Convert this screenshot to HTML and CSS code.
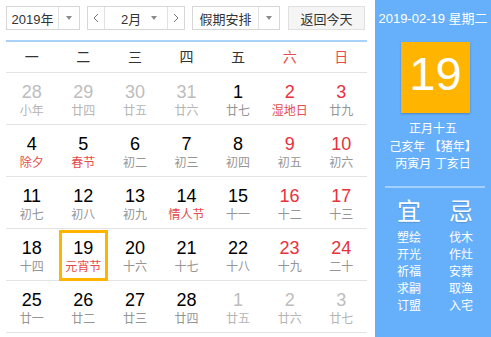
FILE: index.html
```html
<!DOCTYPE html>
<html lang="zh">
<head>
    <meta charset="UTF-8">
    <title>万年历</title>
    <link rel="stylesheet" href="styles.css">
</head>
<body>
    <div class="cal">
        <div class="toolbar">
            <div class="sel sel-year">
                <span class="sel-text">2019年</span>
                <span class="sel-arrow"><i class="caret"></i></span>
            </div>
            <div class="sel sel-month">
                <span class="nav-btn">
                    <svg width="6" height="10" viewBox="0 0 6 10"><polyline points="5,1 1,5 5,9" fill="none" stroke="#777" stroke-width="1"/></svg>
                </span>
                <span class="sel-text month-text">2月 <i class="caret"></i></span>
                <span class="nav-btn">
                    <svg width="6" height="10" viewBox="0 0 6 10"><polyline points="1,1 5,5 1,9" fill="none" stroke="#777" stroke-width="1"/></svg>
                </span>
            </div>
            <div class="sel sel-holiday">
                <span class="sel-text">假期安排</span>
                <span class="sel-arrow"><i class="caret"></i></span>
            </div>
            <div class="today-btn">返回今天</div>
        </div>

        <div class="week">
            <span>一</span><span>二</span><span>三</span><span>四</span><span>五</span><span class="red">六</span><span class="red">日</span>
        </div>

        <div class="grid" id="grid"></div>
    </div>

    <div class="side">
        <div class="side-date">2019-02-19 星期二</div>
        <div class="big-day">19</div>
        <div class="lunar">
            <p>正月十五</p>
            <p>己亥年 【猪年】</p>
            <p>丙寅月 丁亥日</p>
        </div>
        <div class="divider"></div>
        <div class="yiji">
            <div class="col">
                <div class="yj-title">宜</div>
                <p>塑绘</p><p>开光</p><p>祈福</p><p>求嗣</p><p>订盟</p>
            </div>
            <div class="col">
                <div class="yj-title">忌</div>
                <p>伐木</p><p>作灶</p><p>安葬</p><p>取渔</p><p>入宅</p>
            </div>
        </div>
    </div>

    <script>
        // [day, lunar, flags]  o = other month, w = weekend, f = festival, s = selected
        let days = [
            ["28", "小年", "o"], ["29", "廿四", "o"], ["30", "廿五", "o"], ["31", "廿六", "o"], ["1", "廿七", ""], ["2", "湿地日", "w f"], ["3", "廿九", "w"],
            ["4", "除夕", "f"], ["5", "春节", "f"], ["6", "初二", ""], ["7", "初三", ""], ["8", "初四", ""], ["9", "初五", "w"], ["10", "初六", "w"],
            ["11", "初七", ""], ["12", "初八", ""], ["13", "初九", ""], ["14", "情人节", "f"], ["15", "十一", ""], ["16", "十二", "w"], ["17", "十三", "w"],
            ["18", "十四", ""], ["19", "元宵节", "f s"], ["20", "十六", ""], ["21", "十七", ""], ["22", "十八", ""], ["23", "十九", "w"], ["24", "二十", "w"],
            ["25", "廿一", ""], ["26", "廿二", ""], ["27", "廿三", ""], ["28", "廿四", ""], ["1", "廿五", "o"], ["2", "廿六", "o"], ["3", "廿七", "o"]
        ];

        let grid = document.getElementById("grid");
        for (let r = 0; r < 5; r++) {
            let row = document.createElement("div");
            row.className = "row";
            for (let c = 0; c < 7; c++) {
                let d = days[r * 7 + c];
                let flags = d[2].split(" ");
                let cell = document.createElement("div");
                cell.className = "cell";
                if (flags.includes("o")) cell.classList.add("other");
                if (flags.includes("w")) cell.classList.add("weekend");
                if (flags.includes("f")) cell.classList.add("fest");
                if (flags.includes("s")) cell.classList.add("selected");
                cell.innerHTML = '<div class="num">' + d[0] + '</div><div class="lun">' + d[1] + '</div>';
                row.appendChild(cell);
            }
            grid.appendChild(row);
        }
    </script>
</body>
</html>
```

FILE: styles.css
```css
html, body {
    margin: 0;
    padding: 0;
    height: 100%;
    overflow: hidden;
    font-family: "Liberation Sans", "Noto Sans CJK SC", sans-serif;
    background: #fff;
}
body {
    display: flex;
}
p {
    margin: 0;
}
.cal {
    width: 361px;
    padding: 6px 8px 0 6px;
    flex-shrink: 0;
}
.toolbar {
    display: flex;
    height: 24px;
    font-size: 13px;
    color: #333;
}
.sel {
    display: flex;
    box-sizing: border-box;
    height: 24px;
    border: 1px solid #d6d6d6;
    background: #fff;
    margin-right: 7px;
}
.sel-text {
    display: flex;
    align-items: center;
    justify-content: center;
    border-right: 1px solid #e2e2e2;
}
.sel-arrow {
    display: flex;
    align-items: center;
    justify-content: center;
    flex: 1;
}
.caret {
    display: inline-block;
    width: 0;
    height: 0;
    border-left: 3px solid transparent;
    border-right: 3px solid transparent;
    border-top: 4px solid #8a8a8a;
}
.sel-year {
    width: 74px;
}
.sel-year .sel-text {
    width: 51px;
}
.sel-month {
    width: 98px;
}
.nav-btn {
    width: 16px;
    display: flex;
    align-items: center;
    justify-content: center;
}
.month-text {
    flex: 1;
    border-left: 1px solid #e2e2e2;
    justify-content: space-between;
    padding: 0 10px 0 16px;
}
.sel-holiday {
    width: 88px;
    margin-left: 0;
}
.sel-holiday .sel-text {
    width: 65px;
}
.today-btn {
    box-sizing: border-box;
    width: 77px;
    height: 24px;
    margin-left: 1px;
    border: 1px solid #e0e0e0;
    background: #f5f5f5;
    display: flex;
    align-items: center;
    justify-content: center;
}
.week {
    display: grid;
    grid-template-columns: repeat(7, 1fr);
    margin-top: 10px;
    border-top: 2px solid #a9d2f8;
    border-bottom: 1px solid #e3e3e3;
    height: 30px;
    line-height: 30px;
    text-align: center;
    font-size: 14px;
    color: #333;
}
.week .red {
    color: #e84a4a;
}
.row {
    display: grid;
    grid-template-columns: repeat(7, 1fr);
    height: 51px;
    border-bottom: 1px solid #e3e3e3;
}
.cell {
    box-sizing: border-box;
    height: 51px;
    padding-top: 9px;
    text-align: center;
}
.num {
    font-size: 18px;
    line-height: 21px;
    color: #000;
}
.lun {
    font-size: 12px;
    line-height: 17px;
    color: #959595;
}
.cell.weekend .num {
    color: #e8313c;
}
.cell.fest .lun {
    color: #e54b4b;
}
.cell.other .num {
    color: #bdbdbd;
}
.cell.other .lun {
    color: #b5b5b5;
}
.cell.selected {
    border: 3px solid #ffb400;
    margin: 1px 1px -1px 1px;
    padding-top: 5px;
}
.side {
    flex: 1;
    background: #66affb;
    color: #fff;
    text-align: center;
}
.side-date {
    margin-top: 11px;
    font-size: 13px;
    line-height: 16px;
}
.big-day {
    width: 69px;
    height: 71px;
    margin: 15px 0 0 26px;
    background: #ffb400;
    box-shadow: 0 1px 2px rgba(0, 0, 0, 0.25);
    font-size: 47px;
    line-height: 64px;
}
.lunar {
    margin-top: 8px;
    font-size: 12px;
    line-height: 17.5px;
}
.divider {
    height: 2px;
    margin: 12px 6px 0 10px;
    background: rgba(255, 255, 255, 0.4);
}
.yiji {
    display: flex;
    padding-left: 8px;
    margin-top: 10px;
}
.col {
    width: 52px;
    font-size: 12px;
    line-height: 17px;
}
.yj-title {
    font-size: 24px;
    line-height: 28px;
    margin-bottom: 4px;
    text-shadow: 0 1px 1px rgba(0, 0, 0, 0.15);
}
```
